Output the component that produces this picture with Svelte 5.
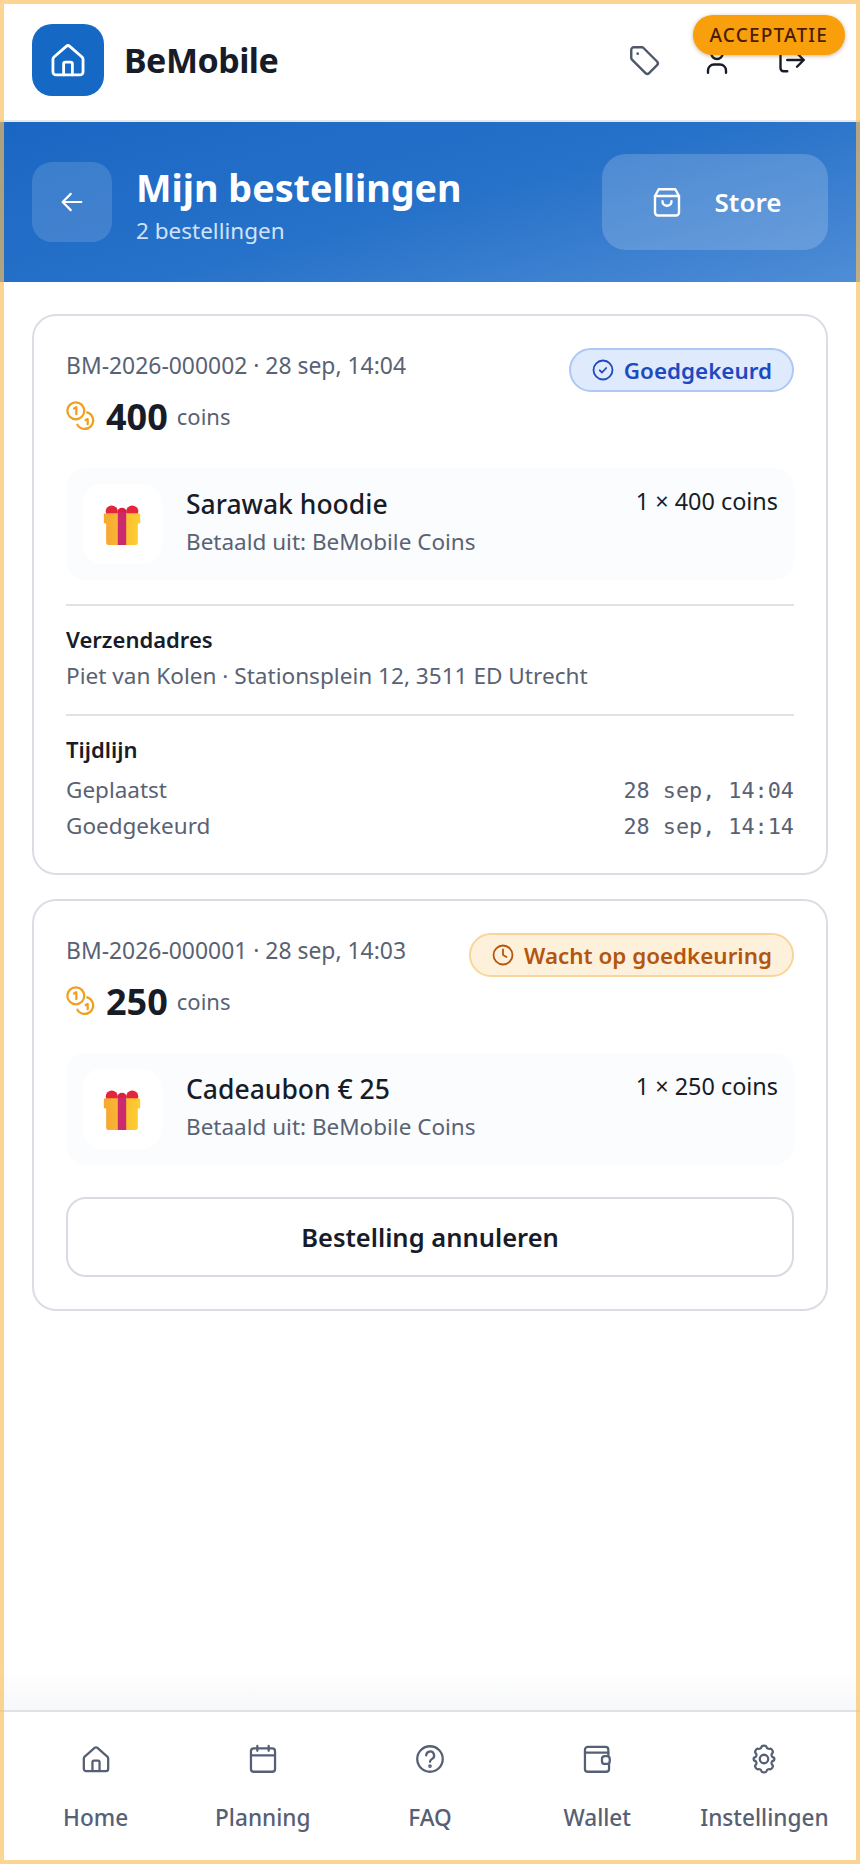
<script>
  const nav = [
    { label: "Home", icon: "home" },
    { label: "Planning", icon: "calendar" },
    { label: "FAQ", icon: "help" },
    { label: "Wallet", icon: "wallet" },
    { label: "Instellingen", icon: "gear" }
  ];
</script>

{#snippet homeIcon(size)}
  <svg width={size} height={size} viewBox="0 0 24 24" fill="none" stroke="currentColor" stroke-width="1.6" stroke-linejoin="round" stroke-linecap="round">
    <path d="M4 10.3 11 4.2a1.5 1.5 0 0 1 2 0l7 6.1c.4.4.6.8.6 1.3v7.2a1.7 1.7 0 0 1-1.7 1.7H5.100a1.700 1.700 0 0 1-1.700-1.700v-7.200c0-.5.2-.9.600-1.300Z" />
    <path d="M9.500 20.500v-6.300a1 1 0 0 1 1-1h3a1 1 0 0 1 1 1v6.300" />
  </svg>
{/snippet}

{#snippet gift()}
  <svg width="38" height="41" viewBox="0 0 40 44">
    <defs>
      <linearGradient id="box" x1="0" x2="1" y1="0" y2="0">
        <stop offset="0" stop-color="#f7a733" />
        <stop offset="1" stop-color="#fdce30" />
      </linearGradient>
    </defs>
    <circle cx="9" cy="8" r="6.500" fill="#e3263b" />
    <circle cx="31" cy="8" r="6.500" fill="#e3263b" />
    <circle cx="20" cy="9" r="5" fill="#d9213f" />
    <rect x="3" y="14" width="34" height="30" rx="2.500" fill="url(#box)" />
    <rect x="0.500" y="10" width="39" height="11" rx="1.500" fill="url(#box)" />
    <rect x="15.500" y="9" width="9" height="35" fill="#cc2a6e" />
  </svg>
{/snippet}

{#snippet coins()}
  <svg class="coins" width="31" height="31" viewBox="0 0 30 30" fill="none" stroke="#f0a01e" stroke-width="2.200" stroke-linecap="round" stroke-linejoin="round">
    <circle cx="9.500" cy="9.500" r="8.200" />
    <path d="M7.800 7.200 10 6v6.800" />
    <path d="M20.500 11a8.200 8.200 0 1 1-9.500 12" />
    <path d="M19 18.500l2-1v5" />
  </svg>
{/snippet}

<div class="page">
  <header class="topbar">
    <div class="brand">
      <div class="logo">{@render homeIcon(42)}</div>
      <span class="brand-name">BeMobile</span>
    </div>
    <div class="actions">
      <svg class="tag" width="36" height="36" viewBox="0 0 24 24" fill="none" stroke="currentColor" stroke-width="1.600" stroke-linejoin="round">
        <path d="M3.500 5.200a1.700 1.700 0 0 1 1.700-1.700h5.300c.5 0 .9.200 1.200.5l9 9a1.700 1.700 0 0 1 0 2.400l-5.300 5.300a1.700 1.700 0 0 1-2.400 0l-9-9a1.700 1.700 0 0 1-.5-1.200Z" />
        <circle cx="7.800" cy="7.800" r="0.900" fill="currentColor" stroke="none" />
      </svg>
      <svg width="36" height="36" viewBox="0 0 24 24" fill="none" stroke="currentColor" stroke-width="1.600" stroke-linecap="round">
        <circle cx="12" cy="7.500" r="3.800" />
        <path d="M6 20.500v-1.500a4 4 0 0 1 4-4h4a4 4 0 0 1 4 4v1.500" />
      </svg>
      <svg width="36" height="36" viewBox="0 0 24 24" fill="none" stroke="currentColor" stroke-width="1.600" stroke-linecap="round" stroke-linejoin="round">
        <path d="M9.500 4.500H7a2 2 0 0 0-2 2v11a2 2 0 0 0 2 2h2.500" />
        <path d="M9.500 12H20.500M16 7.500l4.500 4.500-4.500 4.500" />
      </svg>
    </div>
    <span class="env">ACCEPTATIE</span>
  </header>

  <section class="hero">
    <button class="back" aria-label="Terug">
      <svg width="30" height="30" viewBox="0 0 24 24" fill="none" stroke="currentColor" stroke-width="1.700" stroke-linecap="round" stroke-linejoin="round">
        <path d="M19.500 12H5M11 5.500 4.500 12l6.500 6.500" />
      </svg>
    </button>
    <div class="hero-text">
      <h1>Mijn bestellingen</h1>
      <p>2 bestellingen</p>
    </div>
    <button class="store">
      <svg width="36" height="36" viewBox="0 0 24 24" fill="none" stroke="currentColor" stroke-width="1.600" stroke-linecap="round" stroke-linejoin="round">
        <path d="M6.500 3.500h11l2.500 4.500v11a2 2 0 0 1-2 2H6a2 2 0 0 1-2-2V8Z" />
        <path d="M4 8h16M9 11.500c0 4 6 4 6 0" />
      </svg>
      <span>Store</span>
    </button>
  </section>

  <main class="list">
    <article class="card">
      <div class="card-head">
        <div>
          <div class="order-id">BM-2026-000002 · 28 sep, 14:04</div>
          <div class="amount">{@render coins()}<strong>400</strong><span>coins</span></div>
        </div>
        <span class="status blue">
          <svg width="24" height="24" viewBox="0 0 24 24" fill="none" stroke="currentColor" stroke-width="1.800" stroke-linecap="round" stroke-linejoin="round">
            <circle cx="12" cy="12" r="9.500" /><path d="m8.800 12.300 2.200 2.200 4.200-4.500" />
          </svg>
          Goedgekeurd
        </span>
      </div>
      <div class="item">
        <div class="thumb">{@render gift()}</div>
        <div class="item-text">
          <div class="item-name">Sarawak hoodie</div>
          <div class="item-sub">Betaald uit: BeMobile Coins</div>
        </div>
        <div class="item-price">1 × 400 coins</div>
      </div>
      <div class="block">
        <h3>Verzendadres</h3>
        <p>Piet van Kolen · Stationsplein 12, 3511 ED Utrecht</p>
      </div>
      <div class="block">
        <h3>Tijdlijn</h3>
        <div class="line"><span>Geplaatst</span><code>28 sep, 14:04</code></div>
        <div class="line"><span>Goedgekeurd</span><code>28 sep, 14:14</code></div>
      </div>
    </article>

    <article class="card">
      <div class="card-head">
        <div>
          <div class="order-id">BM-2026-000001 · 28 sep, 14:03</div>
          <div class="amount">{@render coins()}<strong>250</strong><span>coins</span></div>
        </div>
        <span class="status amber">
          <svg width="24" height="24" viewBox="0 0 24 24" fill="none" stroke="currentColor" stroke-width="1.800" stroke-linecap="round" stroke-linejoin="round">
            <circle cx="12" cy="12" r="9.500" /><path d="M12 6.500V12l3.500 2" />
          </svg>
          Wacht op goedkeuring
        </span>
      </div>
      <div class="item">
        <div class="thumb">{@render gift()}</div>
        <div class="item-text">
          <div class="item-name">Cadeaubon € 25</div>
          <div class="item-sub">Betaald uit: BeMobile Coins</div>
        </div>
        <div class="item-price">1 × 250 coins</div>
      </div>
      <button class="cancel">Bestelling annuleren</button>
    </article>
  </main>

  <nav class="tabs">
    {#each nav as tab}
      <div class="tab">
        {#if tab.icon === "home"}
          {@render homeIcon(34)}
        {:else if tab.icon === "calendar"}
          <svg width="34" height="34" viewBox="0 0 24 24" fill="none" stroke="currentColor" stroke-width="1.600" stroke-linecap="round" stroke-linejoin="round">
            <rect x="3.500" y="4.500" width="17" height="16.500" rx="2" />
            <path d="M3.500 9.500h17M8 2.800v3.400M16 2.800v3.400" />
          </svg>
        {:else if tab.icon === "help"}
          <svg width="34" height="34" viewBox="0 0 24 24" fill="none" stroke="currentColor" stroke-width="1.600" stroke-linecap="round" stroke-linejoin="round">
            <circle cx="12" cy="12" r="9" />
            <path d="M9.300 9.500a2.800 2.800 0 1 1 4.200 2.400c-.9.500-1.500 1.100-1.500 2.100" />
            <circle cx="12" cy="17" r="0.500" fill="currentColor" />
          </svg>
        {:else if tab.icon === "wallet"}
          <svg width="34" height="34" viewBox="0 0 24 24" fill="none" stroke="currentColor" stroke-width="1.600" stroke-linecap="round" stroke-linejoin="round">
            <path d="M20 9.500V5.500a2 2 0 0 0-2-2H5.500a2 2 0 0 0-2 2V19a2 2 0 0 0 2 2H18.500a2 2 0 0 0 2-2v-3" />
            <path d="M3.500 7.500H20" />
            <rect x="15.500" y="10" width="5.500" height="5.500" rx="2" />
          </svg>
        {:else}
          <svg width="34" height="34" viewBox="0 0 24 24" fill="none" stroke="currentColor" stroke-width="1.600" stroke-linecap="round" stroke-linejoin="round">
            <path d="M10.200 3.500c.3-1.300 3.300-1.300 3.600 0 .2 1 1.300 1.600 2.300 1.300 1.300-.4 2.800 2.200 1.800 3.100-.8.700-.8 2 0 2.700 0 0 0 0 0 0 1.900 0 1.900 2.800 0 2.800-.8.700-.8 2 0 2.700 1 .9-.5 3.500-1.800 3.100-1-.3-2.100.3-2.300 1.300-.3 1.300-3.300 1.300-3.600 0-.2-1-1.300-1.600-2.300-1.300-1.300.4-2.800-2.200-1.800-3.100.8-.7.8-2 0-2.700-1.900 0-1.900-2.800 0-2.800.8-.7.800-2 0-2.700-1-.9.500-3.500 1.800-3.100 1 .3 2.100-.3 2.300-1.300Z" />
            <circle cx="12" cy="12" r="3" />
          </svg>
        {/if}
        <span>{tab.label}</span>
      </div>
    {/each}
  </nav>

  <div class="frame"></div>
</div>

<style>
  :global(body) {
    margin: 0;
    background: #fff;
    font-family: "Noto Sans", "Open Sans", sans-serif;
    color: #171c28;
  }

  .page {
    position: relative;
    height: 1864px;
    display: flex;
    flex-direction: column;
    overflow: hidden;
  }

  /* rand over de hele pagina */
  .frame {
    position: absolute;
    inset: 0;
    border: 4px solid rgba(251, 191, 90, 0.65);
    pointer-events: none;
  }

  .topbar {
    position: relative;
    height: 120px;
    padding: 0 32px;
    display: flex;
    align-items: center;
    justify-content: space-between;
    border-bottom: 2px solid #e5e8ec;
  }

  .brand {
    display: flex;
    align-items: center;
    gap: 20px;
  }

  .logo {
    width: 72px;
    height: 72px;
    border-radius: 20px;
    background: #1568c4;
    color: #fff;
    display: flex;
    align-items: center;
    justify-content: center;
  }

  .brand-name {
    font-size: 34px;
    font-weight: 700;
    letter-spacing: -0.5px;
  }

  .actions {
    display: flex;
    align-items: center;
    gap: 38px;
    margin-right: 19px;
    color: #171c28;
  }

  .tag {
    color: #4f5868;
    margin-right: -1px;
  }

  .env {
    position: absolute;
    top: 15px;
    right: 15px;
    height: 40px;
    padding: 0 17px;
    display: flex;
    align-items: center;
    border-radius: 20px;
    background: #f99f0c;
    color: #4a1d06;
    font-size: 19px;
    font-weight: 500;
    letter-spacing: 1.2px;
    box-shadow: 0 1px 4px rgba(120, 70, 0, 0.4);
  }

  .hero {
    height: 160px;
    padding: 0 32px;
    display: flex;
    align-items: center;
    color: #fff;
    background: linear-gradient(165deg, #1a67c3 0%, #2671c9 50%, #4f8dd6 100%);
  }

  .back {
    width: 80px;
    height: 80px;
    margin-right: 24px;
    padding: 0;
    border: 0;
    border-radius: 20px;
    background: rgba(255, 255, 255, 0.14);
    color: #fff;
    display: flex;
    align-items: center;
    justify-content: center;
  }

  .hero-text {
    flex: 1;
    padding-top: 7px;
  }

  h1 {
    margin: 0;
    font-size: 37.7px;
    font-weight: 700;
    line-height: 46px;
  }

  .hero-text p {
    margin: 5px 0 0;
    font-size: 22.5px;
    line-height: 30px;
    color: #cfe2f8;
  }

  .store {
    width: 226px;
    height: 96px;
    border: 0;
    border-radius: 24px;
    background: rgba(255, 255, 255, 0.18);
    color: #fff;
    font-family: inherit;
    font-size: 26px;
    font-weight: 600;
    display: flex;
    align-items: center;
    justify-content: center;
    gap: 30px;
  }

  .list {
    flex: 1;
    padding: 32px 32px 0;
    display: flex;
    flex-direction: column;
    gap: 24px;
    background: linear-gradient(to bottom, #fff 97%, #f7f8fa 100%);
  }

  .card {
    padding: 32px;
    border: 2px solid #dadee4;
    border-radius: 24px;
    background: #fff;
  }

  .card-head {
    display: flex;
    justify-content: space-between;
    align-items: flex-start;
  }

  .order-id {
    margin-top: 3px;
    font-size: 22.9px;
    line-height: 30px;
    color: #596273;
  }

  .amount {
    margin-top: 13px;
    display: flex;
    align-items: center;
    height: 44px;
  }

  .coins {
    margin-right: 9px;
  }

  .amount strong {
    font-size: 36px;
    font-weight: 700;
    margin-right: 9px;
  }

  .amount span {
    font-size: 22px;
    color: #596273;
  }

  .status {
    height: 44px;
    padding: 0 20px;
    display: flex;
    align-items: center;
    gap: 9px;
    border-radius: 22px;
    font-size: 22.4px;
    font-weight: 600;
    box-sizing: border-box;
  }

  .blue {
    background: #dfeafd;
    border: 2px solid #adc8f4;
    color: #1d4ac0;
  }

  .amber {
    background: #fef1dc;
    border: 2px solid #f8d598;
    color: #b3560f;
  }

  .item {
    margin-top: 30px;
    padding: 16px;
    display: flex;
    align-items: flex-start;
    border-radius: 20px;
    background: #fafcfe;
  }

  .thumb {
    width: 80px;
    height: 80px;
    flex-shrink: 0;
    margin-right: 24px;
    border-radius: 20px;
    background: #fff;
    display: flex;
    align-items: center;
    justify-content: center;
  }

  .item-text {
    flex: 1;
    padding-top: 2px;
  }

  .item-name {
    font-size: 26.5px;
    font-weight: 500;
    line-height: 36px;
  }

  .item-sub {
    margin-top: 5px;
    font-size: 22.5px;
    line-height: 30px;
    color: #596273;
  }

  .item-price {
    font-size: 23.4px;
    line-height: 34px;
  }

  .block {
    margin-top: 24px;
    padding-top: 17px;
    border-top: 2px solid #dfe2e7;
  }

  .block + .block {
    margin-top: 23px;
  }

  h3 {
    margin: 0;
    font-size: 22px;
    font-weight: 600;
    line-height: 32px;
  }

  .block p {
    margin: 6px 0 0;
    font-size: 22.6px;
    line-height: 30px;
    color: #596273;
  }

  .line {
    margin-top: 6px;
    display: flex;
    justify-content: space-between;
    align-items: baseline;
    font-size: 22.5px;
    line-height: 30px;
    color: #596273;
  }

  h3 + .line {
    margin-top: 10px;
  }

  code {
    font-family: "DejaVu Sans Mono", monospace;
    font-size: 21.8px;
    line-height: 1;
  }

  .cancel {
    width: 100%;
    height: 80px;
    margin-top: 32px;
    border: 2px solid #d8dce2;
    border-radius: 20px;
    background: #fff;
    color: #171c28;
    font-family: inherit;
    font-size: 25.5px;
    font-weight: 600;
  }

  .tabs {
    height: 152px;
    display: grid;
    grid-template-columns: repeat(5, 1fr);
    padding: 0 12px;
    border-top: 2px solid #dfe2e7;
    background: #fff;
  }

  .tab {
    padding-top: 30px;
    display: flex;
    flex-direction: column;
    align-items: center;
    gap: 26px;
    color: #566074;
    font-size: 22.6px;
    font-weight: 500;
  }
</style>
